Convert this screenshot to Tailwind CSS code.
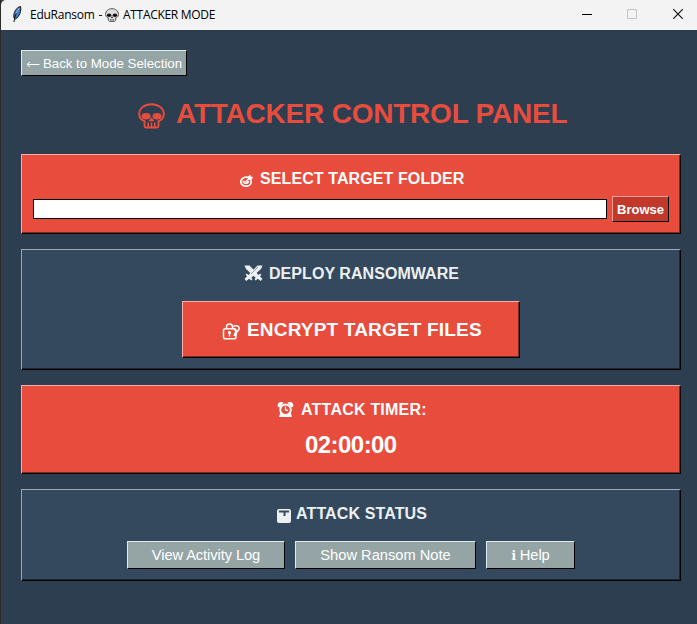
<!DOCTYPE html>
<html lang="en">
<head>
<meta charset="utf-8">
<title>EduRansom</title>
<script src="https://cdn.jsdelivr.net/npm/@tailwindcss/browser@4"></script>
</head>
<body class="bg-[#2c3e50] overflow-hidden font-['Liberation_Sans',Arial,sans-serif] text-white">
<svg class="hidden">
  <symbol id="skull" viewBox="0 0 27 26">
    <path d="M6.500 18.200C3 17 1.200 14.500 1.200 11 1.200 5.300 6.500 1.200 13.500 1.200S25.800 5.300 25.800 11C25.800 14.500 24 17 20.500 18.200V23Q20.500 24.500 19 24.500H8Q6.500 24.500 6.500 23Z" fill="none" stroke="currentColor" stroke-width="1.900"/>
    <ellipse cx="8" cy="13.200" rx="4.500" ry="3.200" fill="currentColor"/><ellipse cx="19" cy="13.200" rx="4.500" ry="3.200" fill="currentColor"/>
    <path d="M13.500 15.500l1.500 2h-3zM10.200 19.500v5M13.500 19.500v5M16.800 19.500v5" fill="currentColor" stroke="currentColor" stroke-width="1.600"/>
  </symbol>
</svg>
<div class="w-[697px] h-[624px] flex flex-col border-l border-[#2b2b2b]">
  <header class="h-[30px] shrink-0 bg-[#f3f3f3] text-black flex items-center rounded-tl-[5px]">
    <svg class="ml-[10px] w-[12px] h-[18px] -mt-[2px]" viewBox="0 0 12 18"><path d="M3 13C2 8 5 2.500 9.500 1.500 10.500 6 8.500 11.500 4.500 14Z" fill="#3f83cf" stroke="#111" stroke-width="1"/><path d="M3 17C3.500 12 5 8 8 4" fill="none" stroke="#111" stroke-width="1"/><path d="M5 8.500L8 3.500" stroke="#a9d4fa" stroke-width="1"/></svg>
    <span class="ml-[7px] w-[75px] whitespace-nowrap font-['Open_Sans','Noto_Sans',sans-serif] text-[12px] tracking-[-0.25px] [word-spacing:1px]">EduRansom -</span>
    <svg class="w-[14px] h-[14px] -mt-[1px]" viewBox="0 0 14 14"><path d="M3.300 10C1.300 9.500.6 8 .6 6.200.6 3 3.200.7 7 .7s6.400 2.300 6.400 5.500c0 1.800-.7 3.300-2.700 3.800v2.200l-1.200 1.100h-5l-1.200-1.100z" fill="#dedede" stroke="#555" stroke-width="1"/><ellipse cx="4.100" cy="7.300" rx="2.200" ry="1.800" fill="#111"/><ellipse cx="9.900" cy="7.300" rx="2.200" ry="1.800" fill="#111"/><path d="M7 8.500l.8 1.500H6.200zM5.500 11v2M7 11v2M8.500 11v2" fill="#222" stroke="#444" stroke-width=".6"/></svg>
    <span class="ml-[4px] whitespace-nowrap font-['Open_Sans','Noto_Sans',sans-serif] text-[12px] tracking-[-0.3px]">ATTACKER MODE</span>
    <div class="ml-auto mr-[14px] flex items-center gap-[35px] -mt-[2px]">
      <svg class="w-[10px] h-[10px] -ml-px mr-px" viewBox="0 0 10 10"><path d="M0 5.500h10" stroke="#000"/></svg>
      <svg class="w-[10px] h-[10px] -ml-px mr-px" viewBox="0 0 10 10"><rect x=".5" y=".5" width="9" height="9" rx=".5" fill="none" stroke="#c4c4c4"/></svg>
      <svg class="w-[10px] h-[10px]" viewBox="0 0 10 10"><path d="M.3.3l9.400 9.400M9.700.3L.3 9.700" stroke="#111" stroke-width="1.200"/></svg>
    </div>
  </header>
  <main class="pl-[20px] pt-[20px] w-[680px] flex flex-col">
    <button class="w-[166px] h-[26px] bg-[#95a5a6] border border-t-[#dcecf0] border-l-[#dcecf0] border-r-black border-b-black text-[13.300px] tracking-[-0.03px] whitespace-nowrap flex items-center pl-[4px] pt-[1px]"><svg class="w-[14px] h-[9px] mr-[3px] mt-[2px]" viewBox="0 0 14 9"><path d="M13.500 4.500H1M4 2L1 4.500 4 7" fill="none" stroke="#fff" stroke-width="1"/></svg><span>Back to Mode Selection</span></button>

    <h1 class="mt-[18px] h-[40px] pl-[117px] flex items-center text-[#e74c3c] font-bold text-[28px] leading-[40px] tracking-[-0.22px] whitespace-nowrap"><svg class="w-[27px] h-[26px] mt-[3px] mr-[11px]"><use href="#skull"/></svg><span>ATTACKER CONTROL PANEL</span></h1>

    <section class="mt-[20px] h-[80px] w-[660px] bg-[#e74c3c] border border-t-[#f4b0a8] border-l-[#f4b0a8] border-r-black border-b-black shadow-[inset_-1px_-1px_0_#7b2922] flex flex-col">
      <h2 class="mt-[14px] h-[20px] pl-[218px] flex items-center font-bold text-[16px] leading-[20px] tracking-[0.1px] whitespace-nowrap"><svg class="w-[13px] h-[13px] mt-[3px] mr-[7px]" viewBox="0 0 13 13"><ellipse cx="6" cy="7.700" rx="5.200" ry="4.500" fill="none" stroke="#fff" stroke-width="1.700"/><path d="M3 6.500c0 3.800 5.500 4 5.800.5M4.500 6.800c.5 2 3 1.500 3.500-.3" fill="none" stroke="#fff" stroke-width="1.200"/><path d="M5 7.500L8 4.500 7.500 2.500 10.500.8 10.800 2.500 13 3 12 5.300 9 5.800z" fill="#fff"/></svg><span>SELECT TARGET FOLDER</span></h2>
      <div class="mt-[7px] pl-[11px] flex items-center gap-[5px]">
        <input class="w-[574px] h-[20px] bg-white border border-black">
        <button class="w-[57px] h-[26px] bg-[#c0392b] border border-t-[#f0a298] border-l-[#f0a298] border-r-black border-b-black font-bold text-[13px] leading-none">Browse</button>
      </div>
    </section>

    <section class="mt-[15px] h-[121px] w-[660px] bg-[#34495e] border border-t-[#9aa6b2] border-l-[#9aa6b2] border-r-black border-b-black shadow-[inset_-1px_-1px_0_#1c2732] text-[#ecf0f1]">
      <h2 class="mt-[14px] h-[20px] pl-[222px] flex items-center font-bold text-[16px] leading-[20px] tracking-[0.06px] whitespace-nowrap"><svg class="w-[19px] h-[17px] mr-[6px] -mt-[2px]" viewBox="0 0 19 17"><g fill="currentColor"><path d="M.5.5H5.500L14.500 10l1.800-1.500 1 1.200-1.300 1.800 2.500 2.300-1.700 2.200-3-2.300-2 1.800-1.200-1.200 1-1.600L2 4z"/><path d="M18.500.5h-5L4.500 10 2.700 8.500l-1 1.200L3 11.500.5 13.800l1.700 2.200 3-2.300 2 1.800 1.200-1.200-1-1.600L17 4z"/></g><path d="M14 2L7 9" stroke="#34495e" stroke-width=".5"/></svg><span>DEPLOY RANSOMWARE</span></h2>
      <button class="ml-[160px] mt-[17px] w-[338px] h-[57px] bg-[#e74c3c] border border-t-[#f4b0a8] border-l-[#f4b0a8] border-r-black border-b-black shadow-[inset_-1px_-1px_0_#7b2922] text-white flex items-center pl-[39px] font-bold text-[19px] tracking-[0.18px] whitespace-nowrap"><svg class="w-[19px] h-[17px] mt-[4px] mr-[6px]" viewBox="0 0 19 17"><g fill="none" stroke="#fff" stroke-width="1.500"><rect x="1.500" y="5.800" width="12.500" height="10" rx="1.800"/><path d="M4.500 6V4a3 3 0 0 1 6 0v2"/><path d="M11 3.500C13 2 17 2.500 17.200 5c.2 1.800-.7 2.800-2 3.500L13 13"/></g><circle cx="7.500" cy="9.500" r="1.600" fill="#fff"/><path d="M7.500 9v4.500M12 6l2 2-2 5" stroke="#fff" stroke-width="1.500" fill="none"/></svg><span class="pt-[2px]">ENCRYPT TARGET FILES</span></button>
    </section>

    <section class="mt-[15px] h-[89px] w-[660px] bg-[#e74c3c] border border-t-[#f4b0a8] border-l-[#f4b0a8] border-r-black border-b-black shadow-[inset_-1px_-1px_0_#7b2922]">
      <h2 class="mt-[14px] h-[20px] pl-[255px] flex items-center font-bold text-[16px] leading-[20px] tracking-[0.22px] whitespace-nowrap"><svg class="w-[17px] h-[17px] mr-[7px] -mt-[2px]" viewBox="0 0 17 17"><path d="M.8 5.500C0 2 3 0 6.500 1.500L2.500 6.500zM16.200 5.500C17 2 14 0 10.500 1.500l4 5z" fill="#fff"/><path d="M3.200 12L2 16h13l-1.200-4" fill="#fff"/><circle cx="8.500" cy="8.800" r="5.300" fill="#e74c3c" stroke="#fff" stroke-width="2"/><path d="M8.500 5.500V9l2.500.5" fill="none" stroke="#fff" stroke-width="1.300"/></svg><span>ATTACK TIMER:</span></h2>
      <div class="mt-[10px] h-[30px] pl-[283px] font-bold text-[24px] leading-[30px] tracking-[-0.55px] whitespace-nowrap"><span>02:00:00</span></div>
    </section>

    <section class="mt-[15px] h-[92px] w-[660px] bg-[#34495e] border border-t-[#9aa6b2] border-l-[#9aa6b2] border-r-black border-b-black shadow-[inset_-1px_-1px_0_#1c2732]">
      <h2 class="mt-[14px] h-[20px] pl-[255px] flex items-center font-bold text-[16px] leading-[20px] tracking-[0.12px] text-[#ecf0f1] whitespace-nowrap"><svg class="w-[14px] h-[14px] mt-[3px] mr-[5px]" viewBox="0 0 14 14"><rect width="14" height="14" rx="2" fill="#ecf0f1"/><path d="M2 1.500h10v2H8.500V7h-2V3.500H2z" fill="#34495e"/></svg><span>ATTACK STATUS</span></h2>
      <div class="ml-[105px] mt-[17px] flex gap-[10px] text-[14.670px]">
        <button class="w-[158px] h-[28px] bg-[#95a5a6] border border-t-[#dcecf0] border-l-[#dcecf0] border-r-black border-b-black leading-none tracking-[-0.08px] whitespace-nowrap">View Activity Log</button>
        <button class="w-[181px] h-[28px] bg-[#95a5a6] border border-t-[#dcecf0] border-l-[#dcecf0] border-r-black border-b-black leading-none whitespace-nowrap">Show Ransom Note</button>
        <button class="w-[89px] h-[28px] bg-[#95a5a6] border border-t-[#dcecf0] border-l-[#dcecf0] border-r-black border-b-black leading-none tracking-[-0.1px] whitespace-nowrap"><span class="font-['DejaVu_Serif',serif] font-bold text-[12px]">i</span> Help</button>
      </div>
    </section>
  </main>
</div>
</body>
</html>
